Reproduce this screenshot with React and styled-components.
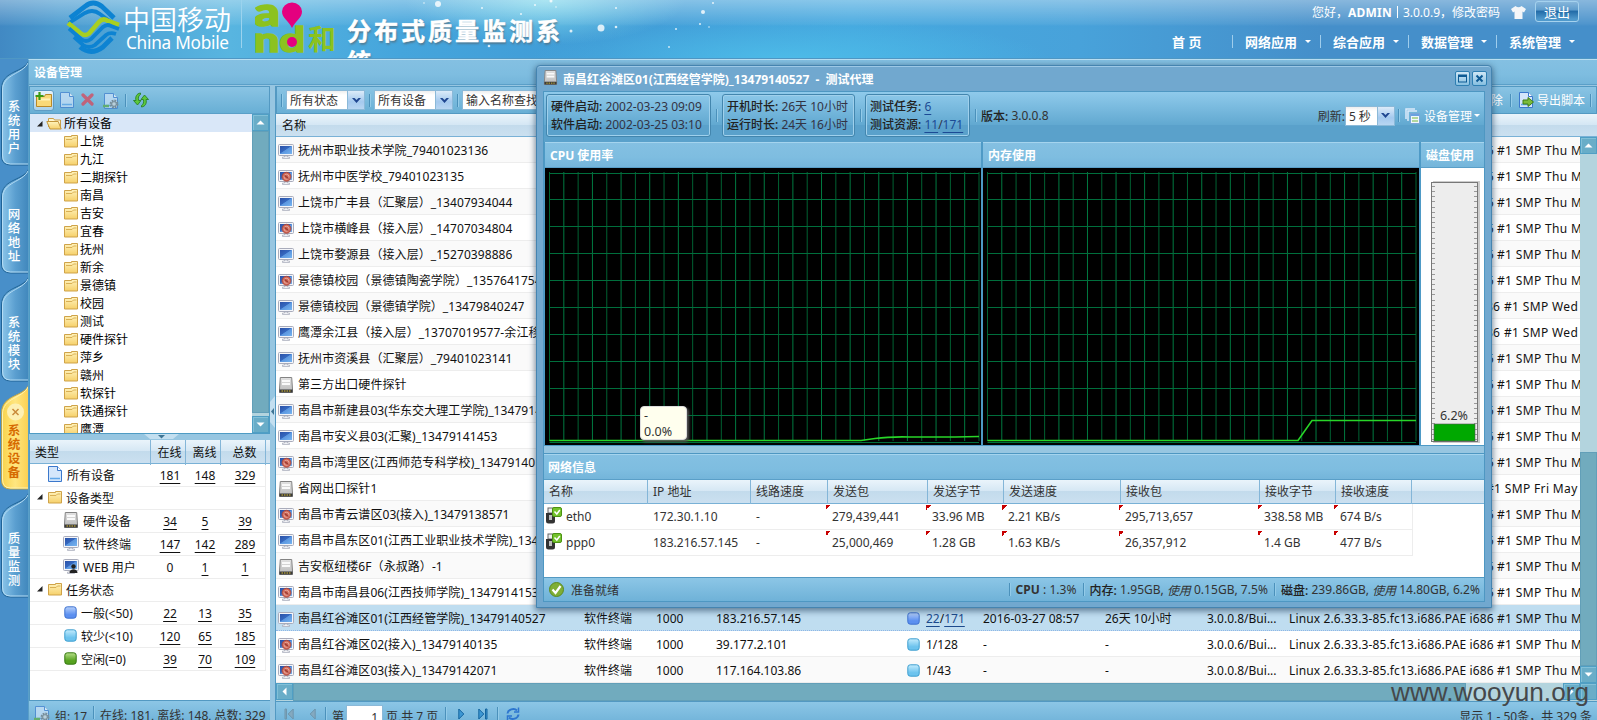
import React from 'react';
import styled, { createGlobalStyle, css } from 'styled-components';

const Global = createGlobalStyle`
  *{box-sizing:border-box}
  body{margin:0;background:#488fc9;font:12px "Noto Sans","Noto Sans CJK SC",sans-serif;color:#111;overflow:hidden}
`;

const Page = styled.div`position:relative;width:1597px;height:720px;overflow:hidden;display:flex;flex-direction:column;background:#488fc9;white-space:nowrap;`;

/* ---------- header ---------- */
const Header = styled.header`
  position:relative;height:59px;flex:none;display:flex;overflow:hidden;
  background:
    linear-gradient(180deg,rgba(255,255,255,.36) 0,rgba(255,255,255,.06) 24px,transparent 26px),
    radial-gradient(ellipse 140px 45px at 545px 0,#8ce4f0cc,transparent),
    radial-gradient(ellipse 260px 40px at 790px 59px,#4dbbe8,transparent),
    linear-gradient(90deg,#4189c3 0,#4a9bd0 60px,#58b5e0 230px,#45a5dc 400px,#409bd6 600px,#45a8df 850px,#48a2da 1080px,#458fca 1320px,#458fca 100%);
  border-bottom:1px solid #4f97c4;
`;
const Stars = styled.svg`position:absolute;left:0;top:0;`;
const Brand = styled.div`position:relative;display:flex;width:342px;padding-left:66px;`;
const BrandName = styled.div`color:#fff;margin-left:2px;padding-top:1px;width:119px;height:48px;border-right:1px solid #9bd3ee;`;
const BrandCn = styled.div`font-size:27px;line-height:36px;height:34px;font-weight:350;font-family:"Noto Sans CJK SC",sans-serif;`;
const BrandEn = styled.div`font-size:17.2px;line-height:16px;letter-spacing:-.25px;padding-left:3px;`;
const And = styled.svg`margin-left:13px;flex:none;`;
const Title = styled.h1`
  position:relative;margin:14px 0 0 5px;width:240px;height:44px;overflow:hidden;white-space:normal;
  font:bold 24px/31px "Noto Sans CJK SC",sans-serif;letter-spacing:3px;color:#fff;-webkit-text-stroke:.5px #fff;text-shadow:1px 2px 2px rgba(90,90,90,.55);
`;
const HeaderRight = styled.div`position:relative;margin-left:auto;width:480px;color:#fff;`;
const UserLine = styled.div`display:flex;align-items:center;justify-content:flex-end;height:24px;padding-right:18px;b{letter-spacing:.2px}svg{margin:0 9px 0 11px}`;
const Divider = styled.i`width:1px;height:12px;background:#fff;margin:0 5px;`;
const Logout = styled.button`
  width:44px;height:21px;padding:0;border:1px solid #a5d2ee;border-radius:3px;color:#fff;font:13px/17px "Noto Sans CJK SC",sans-serif;
  margin-top:-1px;background:linear-gradient(#86b6db,#5f9dcd 40%,#246da9 50%,#4f99cc 90%);
`;
const Nav = styled.nav`display:flex;justify-content:flex-end;padding-right:13px;margin-top:5px;`;
const NavItem = styled.a`
  display:flex;align-items:center;flex:none;width:88px;height:24px;font-weight:bold;font-size:13px;
  &:before{content:"";width:1px;height:13px;background:${p => p.$home ? 'transparent' : '#9fcdec'};margin-right:${p => p.$home ? 27 : 12}px}
`;
const Caret = styled.i`
  border:${p => p.$s || 3}px solid transparent;border-top-color:${p => p.$c || '#fff'};border-bottom:0;margin-left:${p => p.$ml || 0}px;
`;

/* ---------- shell ---------- */
const Body = styled.div`display:flex;flex:1;min-height:0;`;
const Rail = styled.nav`width:28px;flex:none;background:#488fc9;padding-top:1px;`;
const Tab = styled.div`position:relative;height:108px;padding-top:38.5px;svg.shape{position:absolute;left:0;top:0}`;
const TabText = styled.div`
  position:relative;width:14px;margin-left:7px;text-align:center;white-space:normal;font:12.5px/14px "Noto Sans CJK SC",sans-serif;
  color:${p => p.$on ? '#d66a00' : '#fff'};font-weight:${p => p.$on ? 700 : 500};
`;
const Main = styled.main`flex:1;min-width:0;display:flex;flex-direction:column;background:#97c6e1;border-left:1px solid #5a9fc8;border-top:1px solid #b9dff2;`;
const PanelTitle = styled.div`
  height:${p => p.$h || 25}px;flex:none;padding-left:${p => p.$pl || 5}px;line-height:${p => (p.$h || 25)}px;color:#fff;font-weight:bold;
  background:linear-gradient(#84c0e2,#7ebde0 60%,#74b5da);border-bottom:1px solid #5a9fc8;${p => p.$top && css`border-top:1px solid #a5d4ee;`}
`;
const Split = styled.div`display:flex;flex:1;min-height:0;padding-top:1px;`;
const Left = styled.section`width:241px;flex:none;display:flex;flex-direction:column;`;
const Toolbar = styled.div`
  display:flex;align-items:center;height:27px;flex:none;background:linear-gradient(#8ac4e4,#68afd5);border:1px solid #5399c2;border-bottom:0;
`;
const Sep = styled.i`width:1px;height:13px;background:#4b91bb;box-shadow:1px 0 #93cbe9;margin:0 ${p => p.$r || 0}px 0 ${p => p.$l || 0}px;flex:none;`;
const AddButton = styled.button`
  width:21px;height:21px;margin:0 5px 0 3px;padding:0;border:1px solid #5f9cc4;border-radius:3px;background:linear-gradient(#e6f3fb,#a9d1ea);display:grid;place-items:center;
`;
const TreeBox = styled.div`display:flex;height:321px;flex:none;border:1px solid #4f9cc4;border-top-color:#5a9fc8;background:#fff;overflow:hidden;`;
const Tree = styled.div`flex:1;`;
const TreeRow = styled.div`
  display:flex;align-items:center;height:18px;padding:1px 0 0 ${p => p.$root ? 6 : 34}px;font-size:12px;line-height:18px;color:#000;
  background:${p => p.$root ? '#d9e7f8' : '#fff'};svg{margin-right:2px}
`;
const VScroll = styled.div`width:17px;flex:none;display:flex;flex-direction:column;background:#b3d4de;`;
const ScrollBtn = styled.div`
  width:${p => p.$w || 17}px;height:${p => p.$h || 17}px;flex:none;display:grid;place-items:center;background:#69adc8;border:1px solid #509fc4;box-shadow:inset 1px 1px #82c0d8;
`;
const Thumb = styled.div`background:#71abbe;flex:none;border:1px solid #629fb8;${p => p.$w ? css`width:${p.$w}px;` : css`height:${p.$h}px;`}`;
const HandleBar = styled.div`height:6px;flex:none;display:flex;justify-content:center;padding-left:24px;`;

const StatTable = styled.div`background:#fff;height:260px;flex:none;border-left:1px solid #5399c2;`;
const headBg = css`background:linear-gradient(#eaf4fb,#d5e7f4 48%,#c3dbec 50%,#cbe0f0);`;
const StatHead = styled.div`${headBg}display:grid;grid-template-columns:121px 35px 35px 45px 1fr;height:24px;line-height:25px;border-bottom:1px solid #79b1d6;`;
const StatHeadCell = styled.div`text-align:${p => p.$first ? 'left' : 'center'};padding-left:${p => p.$first ? 5 : 3}px;border-right:1px solid #84b6d8;`;
const StatRow = styled.div`display:grid;grid-template-columns:121px 35px 35px 45px;width:236px;height:23px;line-height:24px;border-bottom:1px solid #ededed;border-right:1px solid #ededed;`;
const StatName = styled.div`display:flex;align-items:center;padding-left:${p => p.$pl}px;svg{margin:-4px 4px 0 0}`;
const StatNum = styled.div`text-align:center;padding-left:3px;text-decoration:${p => p.$plain ? 'none' : 'underline'};text-underline-offset:3px;`;
const Status = styled.div`
  display:flex;align-items:flex-start;flex:1;padding:${p => p.$pt || 5}px 5px 0;line-height:20px;color:#333;background:linear-gradient(#8cc6e6,#6fb2d8 22px);border-top:1px solid #5399c2;
  svg{flex:none}
`;
const Gutter = styled.div`width:5px;flex:none;display:flex;align-items:center;justify-content:flex-end;padding-top:18px;`;

/* ---------- grid ---------- */
const Right = styled.section`flex:1;min-width:0;display:flex;flex-direction:column;border-left:1px solid #5399c2;`;
const Combo = styled.div`display:flex;height:20px;width:${p => p.$w}px;border:1px solid #8bb9d8;background:linear-gradient(#eee,#fff 4px);color:#333;line-height:19px;padding-left:${p => p.$pl || 3}px;flex:none;overflow:hidden;`;
const Trigger = styled.span`width:17px;margin-left:auto;background:linear-gradient(#dcebf9,#a4c9ee 60%,#b8d6f2);border-left:1px solid #8bb9d8;display:grid;place-items:center;flex:none;`;
const TextTool = styled.span`color:#fff;display:flex;align-items:center;`;
const Spacer = styled.span`flex:1;`;
const GridHead = styled.div`${headBg}height:24px;flex:none;line-height:23px;padding-left:6px;border-top:1px solid #5399c2;border-bottom:1px solid #79b1d6;`;
const GridArea = styled.div`display:flex;height:546px;flex:none;`;
const Rows = styled.div`flex:1;min-width:0;background:#fff;`;
const Row = styled.div`
  display:grid;grid-template-columns:308px 72px 60px 191px 76px 122px 102px 82px 1fr;height:26px;line-height:27px;
  background:${p => p.$sel ? '#bfddf0' : p.$alt ? '#fafafa' : '#fff'};
  border-bottom:1px ${p => p.$sel ? 'dotted #8fb6e6' : 'solid #ededed'};overflow:hidden;
`;
const Name = styled.div`display:flex;align-items:center;padding-left:2px;letter-spacing:.07px;svg{margin-right:4px;flex:none}`;
const Cell = styled.div`display:flex;align-items:center;overflow:hidden;svg{margin-right:6px;flex:none}`;
const TaskLink = styled.span`color:#1c4a8c;text-decoration:underline;text-underline-offset:3px;`;
const Kernel = styled.div`display:flex;overflow:hidden;letter-spacing:.35px;`;
const KernelName = styled.span`width:${p => p.$w}px;flex:none;text-align:right;padding-right:4px;letter-spacing:.13px;`;
const HScroll = styled.div`display:flex;height:18px;flex:none;background:#b3d4de;`;
const PageInput = styled.span`width:37px;height:22px;margin:-2px 3px 0 2px;border:1px solid #8bb9d8;background:#fff;text-align:right;padding-right:4px;line-height:23px;`;
const Bump = styled.div`margin-left:${p => p.$ml}px;height:16px;padding-top:${p => p.$pt ?? 1}px;display:flex;`;

/* ---------- agent window ---------- */
const Win = styled.section`
  position:absolute;left:536px;top:65px;width:956px;height:543px;padding:0 6px 5px 6px;border:1px solid #4584b0;border-radius:4px 4px 0 0;background:#71a8cf;
  display:flex;flex-direction:column;box-shadow:0 2px 6px 1px rgba(30,60,90,.6),inset 0 1px #9cc8e6;
`;
const WinTitle = styled.div`display:flex;align-items:center;height:25px;flex:none;color:#fff;font-weight:bold;margin-right:-2px;>svg{margin:0 5px 2px 0}`;
const WinBtn = styled.button`width:15px;height:15px;margin:0 0 1px 2px;padding:0;border:1px solid #2f7fb2;border-radius:2px;background:linear-gradient(#cfe7f6,#86bfe0);display:grid;place-items:center;`;
const WinBar = styled.div`
  display:flex;align-items:center;height:51px;flex:none;padding:0 4px 3px 2px;color:#333;background:linear-gradient(#8fcaeb,#62a9d1 65%,#5aa1cb 66%,#5aa1cb);border:1px solid #4e97c2;border-width:1px 1px 0;
`;
const Box = styled.div`height:43px;width:${p => p.$w}px;padding:3px 0 0 4px;line-height:18px;border:1px solid #4386ae;border-radius:3px;box-shadow:inset 0 0 0 1px #9fd0ec;color:#334;`;
const Label = styled.span`color:#222;font-weight:500;`;
const BoxLink = styled.span`color:#1c4a94;text-decoration:underline;text-underline-offset:3px;`;
const WinBody = styled.div`flex:1;display:flex;flex-direction:column;background:#97c6e1;border:1px solid #4e97c2;border-top:0;min-height:0;`;
const Charts = styled.div`display:flex;height:304px;flex:none;background:#4e9ac6;padding:0 0 1px 1px;`;
const ChartPanel = styled.div`width:${p => p.$w}px;margin-right:2px;flex:none;background:${p => p.$bg || '#000'};`;
const NetPanel = styled.div`margin-top:7px;flex:1;background:#fff;display:flex;flex-direction:column;border-top:1px solid #4e97c2;`;
const netCols = css`display:grid;grid-template-columns:104px 103px 77px 100px 76px 117px 139px 76px 76px;`;
const NetHead = styled.div`${headBg}${netCols}height:24px;line-height:24px;border-bottom:1px solid #79b1d6;flex:none;color:#333;`;
const NetHeadCell = styled.div`padding-left:5px;border-right:1px solid #84b6d8;`;
const NetRow = styled.div`${netCols}width:869px;height:26px;line-height:26px;border-bottom:1px solid #ededed;border-right:1px solid #ededed;color:#333;`;
const NetCell = styled.div`
  display:flex;align-items:center;padding-left:${p => p.$first ? 1 : 5}px;
  ${p => p.$dirty && css`margin-left:-2px;padding-left:6px;background:linear-gradient(135deg,#c80000 50%,transparent 50%) no-repeat 0 1px/5px 5px;`}
  svg{margin:-3px 4px 0 0}
`;
const WinStatus = styled.div`display:flex;align-items:center;height:24px;flex:none;color:#333;padding:0 4px 0 5px;letter-spacing:.04px;background:linear-gradient(#8cc6e6,#6fb2d8);border-top:1px solid #5399c2;svg{margin-right:7px}em{letter-spacing:-.1px}`;
const Watermark = styled.div`position:absolute;right:8px;bottom:12px;font:26.2px/32px "Liberation Sans",sans-serif;color:#45484b;`;

/* ---------- icons ---------- */
const Folder = ({ open }) => (
  <svg width={open ? 16 : 14} height="13" viewBox={open ? '0 0 16 13' : '0 0 14 13'}>
    <defs><linearGradient id="fo" x2="0" y2="1"><stop stopColor="#fff3bd" /><stop offset="1" stopColor="#f6d06a" /></linearGradient></defs>
    {open
      ? <><path d="M2.500 10V1.500h5l1 1.500h6V11" fill="#fff6d0" stroke="#c99e48" /><path d="M.8 4.500h11.400l3 7.500H4z" fill="url(#fo)" stroke="#c2953a" /></>
      : <><path d="M.5 1.500h7v-1h6v11.500h-13z" fill="url(#fo)" stroke="#cfa349" /><path d="M2 4.500h6l1.500-1.500h3" stroke="#d9b055" fill="none" /></>}
  </svg>
);
const Monitor = ({ off, user }) => (
  <svg width="16" height="16" viewBox="0 0 16 16">
    <defs><linearGradient id="scr" x2="1" y2="1"><stop stopColor="#2a51a8" /><stop offset=".45" stopColor="#3568bf" /><stop offset=".5" stopColor="#5b96df" /><stop offset="1" stopColor="#76b4f0" /></linearGradient></defs>
    <rect x=".5" y="1.500" width="15" height="11" rx="1" fill="#f4f5f9" stroke="#a9acbb" />
    <rect x="2" y="3" width="12" height="8" fill="url(#scr)" />
    <path d="M6.500 13h3v1h2v1.500h-7V14h2z" fill="#f1f2f6" stroke="#a5a9b8" strokeWidth=".7" />
    {off && <><circle cx="8.500" cy="7.800" r="4.500" fill="#cf6656" stroke="#a03c30" strokeWidth=".7" /><circle cx="8.500" cy="7.800" r="2.500" fill="none" stroke="#eab0a6" strokeWidth=".9" /><path d="M6.500 6.500l4 3" stroke="#9c3a30" strokeWidth="1.200" /></>}
    {user && <><circle cx="10.500" cy="8.500" r="2.200" fill="#222" /><path d="M6.500 15c0-5 8-5 8 0z" fill="#222" /></>}
  </svg>
);
const Server = ({ s = 16 }) => (
  <svg width={s} height={s} viewBox="0 0 16 16">
    <defs><linearGradient id="srv" x2="0" y2="1"><stop stopColor="#e2e2e2" /><stop offset="1" stopColor="#b9b9b9" /></linearGradient></defs>
    <path d="M2.300.5h11.400l.8 11.500v3.500h-13V12z" fill="url(#srv)" stroke="#838383" />
    <path d="M4 4h8M4 7h8" stroke="#fafafa" strokeWidth="1.800" />
    <rect x="1.500" y="12.500" width="13" height="3" fill="#3a3a3a" /><path d="M3.500 14h9" stroke="#d9bd32" strokeDasharray="1.500 1" />
  </svg>
);
const PageIcon = ({ fade, gear, arrow }) => (
  <svg width="16" height="16" viewBox="0 0 16 16" opacity={fade ? 0.65 : 1}>
    <path d="M1.500.5h9l4 4v11h-13z" fill="#d4e6fb" stroke="#3b78cc" /><path d="M10.500.5v4h4" fill="#fff" stroke="#3b78cc" /><path d="M3 12.500h10" stroke="#5fa5e8" strokeWidth="1.500" />
    {gear && <><circle cx="11" cy="11" r="3.200" fill="none" stroke="#777" strokeWidth="2.400" strokeDasharray="1.700 .8" /><circle cx="11" cy="11" r="2.300" fill="#ddd" stroke="#777" /><path d="M0 13h6" stroke="#5aaa3a" strokeWidth="2.500" /></>}
    {arrow && <path d="M5 8h5V5.500L15.500 10 10 14.500V12H5z" fill="#7bbb3a" stroke="#3f7f16" />}
  </svg>
);
const AddFolder = () => (
  <svg width="17" height="16" viewBox="0 0 17 16"><path d="M1.500 4.500h8l1-2h6v12h-15z" fill="#f9d978" stroke="#b98928" /><path d="M3 7.500h12" stroke="#fff2b8" strokeWidth="2" /><path d="M4.500 0v8M.5 4h8" stroke="#3c9a12" strokeWidth="2.200" /></svg>
);
const Cross = () => <svg width="13" height="13" viewBox="0 0 13 13" opacity=".75"><path d="M2 2l9 9M11 2l-9 9" stroke="#d8475a" strokeWidth="3.200" strokeLinecap="round" /></svg>;
const Refresh = () => (
  <svg width="16" height="16" viewBox="0 0 16 16" fill="#5cc83c" stroke="#247a1c" strokeWidth=".8">
    <path d="M7.500 1C3.500 1.500 2 5 3 8.500H.5L4.500 13l3.500-4.500H5.700C5 6 5.500 3.500 7.500 2.500z" /><path d="M8.500 15c4-.5 5.500-4 4.500-7.500h2.500L11.500 3 8 7.500h2.300c.7 2.500.2 5-1.800 6z" />
  </svg>
);
const Tri = ({ c = '#222' }) => <svg width="8" height="8" viewBox="0 0 8 8"><path d="M6.500 1V6.500H1z" fill={c} /></svg>;
const Arrow = ({ d, c = '#fff' }) => (
  <svg width="9" height="9" viewBox="0 0 9 9"><path transform={`rotate(${{ u: 0, r: 90, d: 180, l: 270 }[d]} 4.500 4.500)`} d="M.5 6.500h8L4.500 2.500z" fill={c} /></svg>
);
const Chevron = () => <svg width="9" height="7" viewBox="0 0 9 7"><path d="M0 1h2.500l2 2 2-2H9L4.500 6z" fill="#1f4690" /></svg>;
const LIGHTS = { blue: ['#3f72cf', '#b9d2fb', '#5b8ff0'], sky: ['#3f9fcf', '#c4ecfd', '#6cc3ee'], green: ['#347710', '#b8e08a', '#56a21f'] };
const Light = ({ k, s = 13 }) => {
  const [b, t, m] = LIGHTS[k];
  return <svg width={s} height={s} viewBox="0 0 13 13"><defs><linearGradient id={'l' + k} x2="0" y2="1"><stop stopColor={t} /><stop offset=".7" stopColor={m} /></linearGradient></defs><rect x=".8" y=".8" width="11.400" height="11.400" rx="2.500" fill={`url(#l${k})`} stroke={b} /></svg>;
};
const Usb = () => (
  <svg width="17" height="17" viewBox="0 0 17 17"><rect x="3" y="1" width="5" height="5" fill="#eee" stroke="#666" /><path d="M1 6h9v8q0 2.500-2.500 2.500h-4Q1 16.500 1 14z" fill="#333" /><rect x="4" y="8" width="3" height="5" fill="#bbb" /><rect x="7.500" y=".5" width="9" height="9" rx="1.500" fill="#74c22c" stroke="#4b9212" /><path d="M9.500 4.500l2.300 2.500 3-4" fill="none" stroke="#fff" strokeWidth="1.500" /></svg>
);
const Shirt = () => <svg width="15" height="13" viewBox="0 0 15 13"><path d="M4.500 0q3 2.500 6 0L15 3l-2 3.500-1.500-1V13h-8V5.500L2 6.500 0 3z" fill="#f4f6f8" /></svg>;
const Ok = () => <svg width="15" height="15" viewBox="0 0 15 15"><circle cx="7.500" cy="7.500" r="7" fill="#7fae35" stroke="#5b8a20" /><path d="M3.500 7.500l3 3.500 5-7" fill="none" stroke="#fff" strokeWidth="2.200" /></svg>;
const Stack = () => <svg width="16" height="16" viewBox="0 0 16 16"><path d="M1 11V1h9M3 13V3h9" fill="none" stroke="#dbeafa" strokeWidth="1.500" /><rect x="5.500" y="5.500" width="9" height="10" fill="#eef6ff" stroke="#7aa6d8" /><path d="M6 7h8" stroke="#6aa0e0" strokeWidth="2" /><path d="M7 10h6M7 13h6" stroke="#77b83a" /></svg>;
const PagerIcon = ({ k }) => {
  const off = k === 'first' || k === 'prev';
  const fill = off ? '#84a9bf' : '#3d97d3'; const st = off ? '#6d96ad' : '#14659f';
  const flip = off ? 'scale(-1 1) translate(-10 0)' : undefined;
  return <svg width="10" height="12" viewBox="0 0 10 12"><g transform={flip} fill={fill} stroke={st}><path d="M.8 1v10l5-5z" />{(k === 'first' || k === 'last') && <path d="M7.500 1h1.500v10H7.500z" />}</g></svg>;
};
const Sync = () => <svg width="14" height="14" viewBox="0 0 14 14" fill="none" stroke="#2d76cf" strokeWidth="2"><path d="M1.500 6.500C2 2.500 8 .5 11 3.500M12.500 7.500c-.5 4-6.500 6-9.500 3" /><path d="M12.500.5v4.500H8M1.500 13.500V9H6" strokeWidth="1.500" /></svg>;

/* blue knot crossed by a green band, drawn as stacked chevrons */
const Logo = () => (
  <svg width="55" height="56" viewBox="0 0 55 56" fill="none">
    <path d="M4 18L19 6.500q8-7 17 0L48 18" stroke="#0d83d2" strokeWidth="4.800" />
    <path d="M3 23L19 13q8-4.500 15 1l15 11" stroke="#0d83d2" strokeWidth="3.800" />
    <path d="M2 23l13 10.500q4 3 8 0l10-11.500q4-4.500 9-1l11 4" stroke="#a8cf20" strokeWidth="4.600" />
    <path d="M3 28.500L15 39q5 4 10 0l12-12q4-3.500 8-1l8 3" stroke="#0d83d2" strokeWidth="3.800" />
    <path d="M8 37l9 8q6 4 12 0l11-10q4-3 10-1" stroke="#0d83d2" strokeWidth="3.800" />
    <path d="M14 47q11 9 23 0l9-9" stroke="#0d83d2" strokeWidth="4.800" />
  </svg>
);
const AndLogo = () => (
  <And width="84" height="56" viewBox="0 0 84 56">
    <g fill="#8cc21f" fontFamily="Lato, sans-serif" fontWeight="900" stroke="#8cc21f" strokeWidth="1.600">
      <text x="-1" y="26" fontSize="40" textLength="26" lengthAdjust="spacingAndGlyphs">a</text>
      <text x="-1" y="52" fontSize="34" textLength="51" lengthAdjust="spacingAndGlyphs">nd</text>
    </g>
    <path d="M37 28C33 20 27 18 27 11.500a10 9 0 0 1 20 0c0 6.500-6 8.500-10 16.500z" fill="#e4007f" />
    <circle cx="37" cy="42" r="5" fill="#e4007f" />
    <text x="53" y="50" fontSize="28" fontWeight="700" fill="#8cc21f" fontFamily="Noto Sans CJK SC, sans-serif">和</text>
  </And>
);

/* ---------- data ---------- */
const tabs = ['系统用户', '网络地址', '系统模块', '系统设备', '质量监测'];
const folders = ['上饶', '九江', '二期探针', '南昌', '吉安', '宜春', '抚州', '新余', '景德镇', '校园', '测试', '硬件探针', '萍乡', '赣州', '软探针', '铁通探针', '鹰潭'];
const stats = [
  [17, <PageIcon />, '所有设备', '181', '148', '329'],
  [6, <><Tri /><Folder /></>, '设备类型'],
  [33, <Server />, '硬件设备', '34', '5', '39'],
  [33, <Monitor />, '软件终端', '147', '142', '289'],
  [33, <Monitor user />, 'WEB 用户', '0', '1', '1'],
  [6, <><Tri /><Folder /></>, '任务状态'],
  [34, <Light k="blue" />, '一般(<50)', '22', '13', '35'],
  [34, <Light k="sky" />, '较少(<10)', '120', '65', '185'],
  [34, <Light k="green" />, '空闲(=0)', '39', '70', '109'],
];
const THU = ['Linux 2.6.33.3-85.fc13.i686.PAE i686', '#1 SMP Thu May', 212];
const WED = ['Linux 2.6.35.6-45.fc14.i686 i686', '#1 SMP Wed', 219];
const FRI = ['Linux 2.6.32.12-115.fc12.i686', '#1 SMP Fri May 1', 201];
const devices = [
  ['on', '抚州市职业技术学院_79401023136', THU], ['off', '抚州市中医学校_79401023135', THU],
  ['on', '上饶市广丰县（汇聚层）_13407934044', THU], ['off', '上饶市横峰县（接入层）_14707034804', THU],
  ['on', '上饶市婺源县（接入层）_15270398886', THU], ['off', '景德镇校园（景德镇陶瓷学院）_13576417543', THU],
  ['on', '景德镇校园（景德镇学院）_13479840247', WED], ['on', '鹰潭余江县（接入层）_13707019577-余江移动', WED],
  ['on', '抚州市资溪县（汇聚层）_79401023141', THU], ['hw', '第三方出口硬件探针', THU],
  ['on', '南昌市新建县03(华东交大理工学院)_13479141', THU], ['on', '南昌市安义县03(汇聚)_13479141453', THU],
  ['off', '南昌市湾里区(江西师范专科学校)_1347914014', THU], ['hw', '省网出口探针1', FRI],
  ['off', '南昌市青云谱区03(接入)_13479138571', THU], ['on', '南昌市昌东区01(江西工业职业技术学院)_13479', THU],
  ['hw', '吉安枢纽楼6F（永叔路）-1', THU], ['off', '南昌市南昌县06(江西技师学院)_13479141537', THU],
  ['on', '南昌红谷滩区01(江西经管学院)_13479140527', THU, '183.216.57.145', 'blue', ['22', '171'], '2016-03-27 08:57', '26天 10小时', '3.0.0.8/Bui...'],
  ['off', '南昌红谷滩区02(接入)_13479140135', THU, '39.177.2.101', 'sky', '1/128', '-', '-', '3.0.0.6/Bui...'],
  ['off', '南昌红谷滩区03(接入)_13479142071', THU, '117.164.103.86', 'sky', '1/43', '-', '-', '3.0.0.8/Bui...'],
];
const netHead = ['名称', 'IP 地址', '线路速度', '发送包', '发送字节', '发送速度', '接收包', '接收字节', '接收速度'];
const netRows = [
  ['eth0', '172.30.1.10', '-', '279,439,441', '33.96 MB', '2.21 KB/s', '295,713,657', '338.58 MB', '674 B/s'],
  ['ppp0', '183.216.57.145', '-', '25,000,469', '1.28 GB', '1.63 KB/s', '26,357,912', '1.4 GB', '477 B/s'],
];

const TabItem = ({ name, on }) => {
  const id = on ? 'tabOn' : 'tabOff';
  return (
    <Tab>
      <svg className="shape" width="28" height="108">
        <defs><linearGradient id={id}>{on
          ? <><stop stopColor="#f8d24a" /><stop offset=".5" stopColor="#ffe680" /><stop offset="1" stopColor="#fbd050" /></>
          : <><stop stopColor="#8cc6ea" /><stop offset=".5" stopColor="#5b9fd0" /><stop offset="1" stopColor="#3f86bb" /></>}</linearGradient></defs>
        <path d="M29 0C25 13 1.500 10 1.500 29V96q0 9 9 9H29" fill={`url(#${id})`} stroke={on ? '#b5a050' : '#1f6396'} />
        <path d="M28 3C23 14 2.500 14 2.500 30V95q0 9 8 9H29" fill="none" stroke={on ? '#fff3b0' : '#b5dcf4'} />
        {on && <><circle cx="15.500" cy="28" r="8.500" fill="#fdf0b4" /><path d="M12.500 25l6 6M18.500 25l-6 6" stroke="#c98a3c" strokeWidth="1.500" /></>}
      </svg>
      <TabText $on={on}>{name}</TabText>
    </Tab>
  );
};

const Plot = ({ w, x0, x1, line }) => {
  const v = Array.from({ length: 31 }, (_, i) => x0 + (i * (x1 - x0)) / 30);
  const h = Array.from({ length: 11 }, (_, i) => 4.5 + i * 26.9);
  return (
    <svg width={w} height="277" display="block">
      {v.map((x, i) => <path key={i} d={`M${x} 4V273`} stroke={i % 2 ? '#007a40' : '#006232'} />)}
      {h.map((y, i) => <path key={i} d={`M${x0} ${Math.round(y) + 0.5}H${x1}`} stroke="#006e3c" />)}
      <path d={line} fill="none" stroke="#28d528" strokeWidth="1.600" />
    </svg>
  );
};
const Gauge = () => (
  <svg width="63" height="277" display="block">
    <rect x="12" y="13" width="47" height="262" fill="#aaa" opacity=".6" />
    <rect x="10.500" y="14.500" width="46" height="259" fill="#ededed" stroke="#777" />
    {Array.from({ length: 50 }, (_, i) => <path key={i} d={`M11 ${Math.round(18 + i * 5.16) + 0.5}h3m39 0h3`} stroke="#999" />)}
    <rect x="13" y="256" width="41" height="17" fill="#00a800" stroke="#555" strokeWidth=".6" />
    <text x="33" y="252" fontSize="12.500" textAnchor="middle" fill="#333">6.2%</text>
  </svg>
);
const TooltipBox = styled.div`
  position:absolute;left:103px;top:340px;width:47px;height:34px;padding:1px 3px;border:1px solid #ddd;border-radius:4px;background:#ffffee;color:#333;line-height:16px;font-size:12.5px;box-shadow:2px 2px 3px #555;
`;

export default function App() {
  return (
    <Page>
      <Global />
      <Header>
        <Stars width="1000" height="59" fill="#fff">
          {[[438, 4, 3], [482, 8, 1], [551, 1, 1.500], [535, 5, 1], [521, 14, 1], [556, 7, .8], [571, 31, 1.500], [601, 28, 3.500], [616, 27, 1.300], [616, 8, 1], [703, 12, 2], [713, 3, 1], [676, 29, 1], [700, 24, 1], [709, 27, .8], [669, 47, .9], [489, 46, 1.300], [424, 3, .8]].map(([x, y, r], i) => <circle key={i} cx={x} cy={y} r={r} opacity=".8" />)}
        </Stars>
        <Brand>
          <Logo />
          <BrandName><BrandCn>中国移动</BrandCn><BrandEn>China Mobile</BrandEn></BrandName>
          <AndLogo />
        </Brand>
        <Title>分布式质量监测系统</Title>
        <HeaderRight>
          <UserLine>您好，<b>ADMIN</b><Divider />3.0.0.9，修改密码<Shirt /><Logout>退出</Logout></UserLine>
          <Nav>
            <NavItem $home>首 页</NavItem>
            {['网络应用', '综合应用', '数据管理', '系统管理'].map(t => <NavItem key={t}>{t}<Caret $ml={8} /></NavItem>)}
          </Nav>
        </HeaderRight>
      </Header>
      <Body>
        <Rail>{tabs.map(t => <TabItem key={t} name={t} on={t === '系统设备'} />)}</Rail>
        <Main>
          <PanelTitle>设备管理</PanelTitle>
          <Split>
            <Left>
              <Toolbar>
                <AddButton><AddFolder /></AddButton><PageIcon fade />
                <Bump $ml={6}><Cross /></Bump><Bump $ml={9}><PageIcon fade gear /></Bump><Sep $l={6} $r={7} /><Refresh />
              </Toolbar>
              <TreeBox>
                <Tree>
                  <TreeRow $root><Tri /><Folder open />所有设备</TreeRow>
                  {folders.map(f => <TreeRow key={f}><Folder />{f}</TreeRow>)}
                </Tree>
                <VScroll><ScrollBtn><Arrow d="u" /></ScrollBtn><Thumb $h={282} /><Spacer /><ScrollBtn><Arrow d="d" /></ScrollBtn></VScroll>
              </TreeBox>
              <HandleBar><svg width="35" height="6"><path d="M0 0h35l-6 5H6z" fill="#c3dff0" /><path d="M14 1h7l-3.500 3.500z" fill="#3f7594" /></svg></HandleBar>
              <StatTable>
                <StatHead><StatHeadCell $first>类型</StatHeadCell><StatHeadCell>在线</StatHeadCell><StatHeadCell>离线</StatHeadCell><StatHeadCell>总数</StatHeadCell></StatHead>
                {stats.map(([pl, icon, name, ...nums]) => (
                  <StatRow key={name}><StatName $pl={pl}>{icon}{name}</StatName>{nums.map((n, i) => <StatNum key={i} $plain={n === '0'}>{n}</StatNum>)}</StatRow>
                ))}
              </StatTable>
              <Status><PageIcon gear fade /><Bump $ml={5}>组: 17</Bump><Sep $l={6} $r={6} />在线: 181, 离线: 148, 总数: 329</Status>
            </Left>
            <Gutter><svg width="5" height="32"><path d="M5 0v32L0 26V6z" fill="#c3dff0" /><path d="M4 12v7L1 15.500z" fill="#3f7594" /></svg></Gutter>
            <Right>
              <Toolbar>
                <Sep $l={4} $r={4} /><Combo $w={79}>所有状态<Trigger><Chevron /></Trigger></Combo>
                <Sep $l={4} $r={4} /><Combo $w={79}>所有设备<Trigger><Chevron /></Trigger></Combo>
                <Sep $l={4} $r={4} /><Combo $w={120}>输入名称查找</Combo>
                <Spacer />
                <TextTool>删除<Sep $l={7} $r={7} /><PageIcon arrow />&nbsp;导出脚本<Sep $l={5} $r={5} /></TextTool>
              </Toolbar>
              <GridHead>名称</GridHead>
              <GridArea>
                <Rows>
                  {devices.map(([k, name, kern, ip, light, tasks, time, up, ver], i) => (
                    <Row key={name} $alt={i % 2 === 0} $sel={i === 18}>
                      <Name>{k === 'hw' ? <Server /> : <Monitor off={k === 'off'} />}{name}</Name>
                      <Cell>{ip && '软件终端'}</Cell><Cell>{ip && '1000'}</Cell><Cell>{ip}</Cell>
                      <Cell>{light && <Light k={light} />}{Array.isArray(tasks) ? <><TaskLink>{tasks[0]}</TaskLink>/<TaskLink>{tasks[1]}</TaskLink></> : tasks}</Cell>
                      <Cell>{time}</Cell><Cell>{up}</Cell><Cell>{ver}</Cell>
                      <Kernel><KernelName $w={kern[2] - 4}>{kern[0]}</KernelName>{kern[1]}</Kernel>
                    </Row>
                  ))}
                </Rows>
                <VScroll><ScrollBtn><Arrow d="u" /></ScrollBtn><Spacer /><Thumb $h={214} /><ScrollBtn><Arrow d="d" /></ScrollBtn></VScroll>
              </GridArea>
              <HScroll><ScrollBtn><Arrow d="l" /></ScrollBtn><Thumb $w={1173} /><Spacer /><ScrollBtn><Arrow d="r" /></ScrollBtn><ScrollBtn $w={17} /></HScroll>
              <Status>
                <Bump $ml={3}><PagerIcon k="first" /></Bump><Bump $ml={12}><PagerIcon k="prev" /></Bump><Sep $l={9} $r={6} />第<PageInput>1</PageInput>页,共 7 页
                <Sep $l={7} $r={12} /><Bump $ml={0}><PagerIcon k="next" /></Bump><Bump $ml={10}><PagerIcon k="last" /></Bump><Sep $l={9} $r={8} /><Sync />
                <Spacer />显示 1 - 50条，共 329 条
              </Status>
            </Right>
          </Split>
        </Main>
      </Body>

      <Win>
        <WinTitle><Server s={15} />南昌红谷滩区01(江西经管学院)_13479140527&nbsp;&nbsp;-&nbsp;&nbsp;测试代理<Spacer />
          <WinBtn><svg width="9" height="9"><rect x=".5" y="1" width="8" height="7" fill="none" stroke="#0d5a94" /><path d="M0 2h9" stroke="#0d5a94" strokeWidth="2" /></svg></WinBtn>
          <WinBtn><svg width="9" height="9"><path d="M1.500 1.500l6 6M7.500 1.500l-6 6" stroke="#0d5a94" strokeWidth="2" /></svg></WinBtn>
        </WinTitle>
        <WinBar>
          <Box $w={165}><Label>硬件启动:</Label> 2002-03-23 09:09<br /><Label>软件启动:</Label> 2002-03-25 03:10</Box><Sep $l={5} $r={5} />
          <Box $w={133}><Label>开机时长:</Label> 26天 10小时<br /><Label>运行时长:</Label> 24天 16小时</Box><Sep $l={5} $r={4} />
          <Box $w={105}><Label>测试任务:</Label> <BoxLink>6</BoxLink><br /><Label>测试资源:</Label> <BoxLink>11</BoxLink>/<BoxLink>171</BoxLink></Box><Sep $l={5} $r={5} />
          <Label>版本:</Label>&nbsp;3.0.0.8<Spacer />
          刷新:<Combo $w={50}>5 秒<Trigger><Chevron /></Trigger></Combo><Sep $l={3} $r={6} /><Stack /><TextTool>&nbsp;设备管理<Caret $ml={2} /></TextTool>
        </WinBar>
        <WinBody>
          <Charts>
            <ChartPanel $w={436}><PanelTitle $h={26} $top>CPU 使用率</PanelTitle><Plot w={436} x0={4.5} x1={434} line="M4.500 272.500H316L330 270.500Q345 268.500 365 269H410L434 268.500" /></ChartPanel>
            <ChartPanel $w={436}><PanelTitle $h={26} $top>内存使用</PanelTitle><Plot w={436} x0={4.5} x1={433} line="M4.500 272.500H315L329 252.500H433" /></ChartPanel>
            <ChartPanel $w={63} $bg="#fff"><PanelTitle $h={26} $top $pl={5}>磁盘使用</PanelTitle><Gauge /></ChartPanel>
          </Charts>
          <NetPanel>
            <PanelTitle $h={26} $top $pl={4}>网络信息</PanelTitle>
            <NetHead>{netHead.map(t => <NetHeadCell key={t}>{t}</NetHeadCell>)}</NetHead>
            {netRows.map(r => <NetRow key={r[0]}>{r.map((c, i) => <NetCell key={i} $first={!i} $dirty={i > 2}>{!i && <Usb />}{c}</NetCell>)}</NetRow>)}
            <Spacer />
            <WinStatus><Ok />准备就绪<Spacer /><Sep $r={6} /><b>CPU</b>&nbsp;: 1.3%<Sep $l={6} $r={6} /><Label>内存:</Label>&nbsp;1.95GB,&nbsp;<em>使用</em>&nbsp;0.15GB, 7.5%<Sep $l={6} $r={6} /><Label>磁盘:</Label>&nbsp;239.86GB,&nbsp;<em>使用</em>&nbsp;14.80GB, 6.2%</WinStatus>
          </NetPanel>
        </WinBody>
        <TooltipBox>-<br />0.0%</TooltipBox>
      </Win>
      <Watermark>www.wooyun.org</Watermark>
    </Page>
  );
}
